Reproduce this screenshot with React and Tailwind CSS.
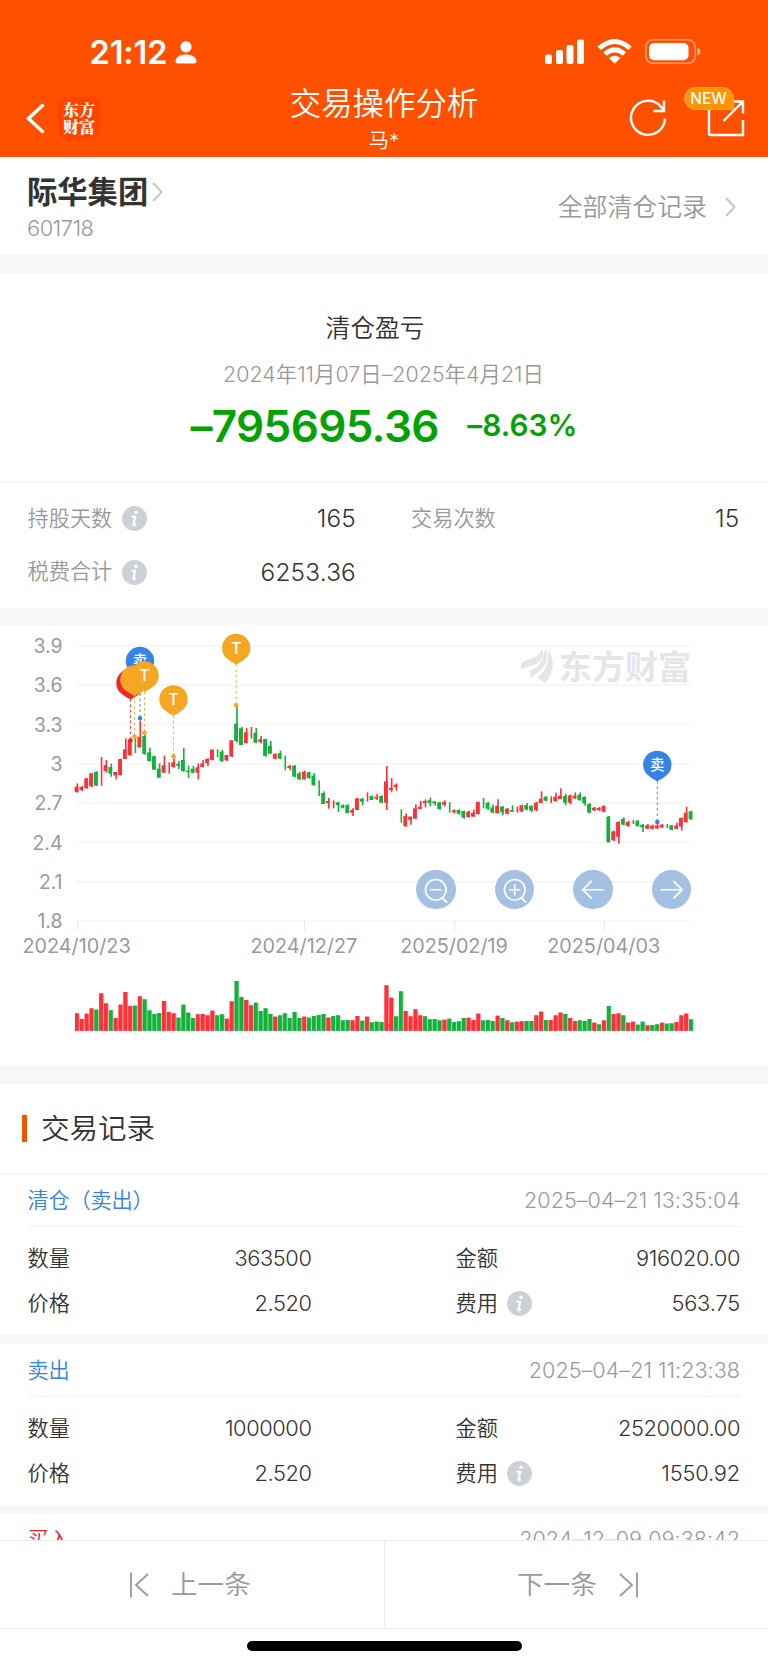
import React from "react";

const UP = "#ff3038";
const DOWN = "#12b23c";

// Per trading day: direction, volume top, wick top, wick bottom, body top, body bottom
const DAYS = `R280 490 518 500 516|R297 498 513 501 510|R281 475 506 475 505|R265 459 501 460 499|G269 454 497 456 497|R220 411 497 0 0|R250 420 458 435 453|G271 431 470 441 461|R294 456 478 456 466|R254 416 466 417 465|R216 355 417 388 417|R258 356 406 358 406|G257 346 399 0 0|R229 302 382 350 382|G238 344 404 348 402|G271 383 423 397 423|G282 407 449 409 449|G279 430 473 446 473|R243 407 458 436 458|R276 427 461 0 0|R280 415 443 427 441|G293 423 447 432 437|G254 384 455 420 453|G278 437 474 452 456|G294 438 460 446 458|R283 430 478 442 458|R282 420 442 430 441|R286 415 438 417 430|R272 388 421 389 420|G286 388 412 0 0|G283 390 426 395 423|R296 405 423 405 421|R244 361 411 361 409|G183 258 368 311 363|G231 321 375 325 375|R240 324 371 337 369|R256 321 356 0 0|G248 324 368 338 368|G273 348 371 358 366|G265 356 410 357 408|G282 363 401 378 401|R290 400 418 402 416|G286 392 418 400 416|G280 407 451 0 0|G294 435 451 438 444|G276 435 472 437 470|G294 455 480 460 478|R290 452 478 455 478|G293 455 476 457 474|G288 459 496 467 496|G285 481 528 0 0|G282 514 552 519 552|R293 534 566 543 549|G288 541 565 0 0|G286 545 576 547 555|G301 553 565 556 563|G300 553 579 555 579|R301 564 588 570 578|R288 534 571 535 570|G302 534 556 536 545|R290 517 545 0 0|G307 526 540 528 540|G305 522 540 530 536|G306 526 548 528 548|R196 438 570 484 548|R233 474 517 504 510|G289 490 512 494 501|G214 568 608 0 0|R273 580 620 588 619|R289 589 614 590 600|R268 553 596 565 596|R286 543 567 560 567|G289 538 562 543 549|G298 533 559 541 549|G297 543 557 544 550|G301 546 569 547 567|R299 541 559 546 554|G296 547 578 0 0|G306 568 580 571 577|G304 568 584 570 581|G294 572 596 573 593|R293 572 593 575 591|R300 569 590 578 590|R281 545 583 546 582|G301 534 565 0 0|G300 546 570 548 566|G303 554 578 562 578|R287 538 580 557 580|G294 558 586 560 577|R301 564 583 566 581|G307 556 576 570 575|R305 560 578 0 0|R304 554 576 556 574|G303 549 571 555 569|G303 556 576 558 572|R286 546 573 548 571|R275 514 549 536 549|G300 529 544 530 542|R300 529 549 0 0|R286 518 545 530 543|R278 505 537 527 537|G282 521 556 528 548|R294 524 553 526 548|R303 517 537 527 535|G301 517 541 524 541|G303 529 557 531 550|G297 549 580 552 578|R308 561 573 563 571|G313 561 573 564 570|R301 556 577 558 575|G258 588 667 590 667|R282 632 663 634 661|R280 604 671 606 650|G286 592 615 597 614|R308 602 620 606 618|R305 600 612 0 0|G314 601 620 602 618|G305 612 636 614 622|R316 612 627 616 626|G315 614 628 617 626|G313 612 628 616 625|R308 612 624 614 622|G311 612 624 0 0|G310 615 631 616 629|R306 608 628 617 626|R286 592 632 594 620|R281 560 608 578 606|G298 572 600 574 598`
  .split("|")
  .map((s) => {
    const n = s.slice(1).split(" ").map(Number);
    return { dir: s[0], vol: n[0], hi: n[1], lo: n[2], top: n[3], bot: n[4] };
  });

// Days whose candle colour differs from the volume bar colour
const CANDLE_FLIP = new Set([38, 44, 53, 62, 66, 72, 78, 108, 119, 120]);

const LABELS = ["3.9", "3.6", "3.3", "3", "2.7", "2.4", "2.1", "1.8"];

function Pin({ x, y, color, label, dotY }) {
  return (
    <g>
      <line x1={x} y1={y + 16} x2={x} y2={dotY} stroke={color} strokeWidth="1.1" strokeDasharray="2.7 2.7" opacity="0.85" />
      <circle cx={x} cy={dotY} r="2.3" fill={color} />
      <path d={`M${x - 11.5} ${y + 8.4}A14.2 14.2 0 1 1 ${x + 11.5} ${y + 8.4}Q${x + 7} ${y + 13} ${x} ${y + 16.4}Q${x - 7} ${y + 13} ${x - 11.5} ${y + 8.4}Z`} fill={color} />
      {label && (
        <text x={x} y={label === "T" ? y + 5.6 : y + 5.4} textAnchor="middle" fill="#fff" fontSize={label === "T" ? 16 : 14.5} fontWeight="500" fontFamily="Inter, 'Noto Sans CJK SC', sans-serif">
          {label}
        </text>
      )}
    </g>
  );
}

function Chart() {
  return (
    <svg className="block h-[441px] w-[768px]" viewBox="0 0 768 441">
      {LABELS.map((t, i) => {
        const y = 20.8 + i * 39.34;
        return (
          <g key={t}>
            <line x1="77" x2="691" y1={y} y2={y} stroke="#f5f5f5" strokeWidth="1.6" />
            <text x="62.5" y={y + 7.2} textAnchor="end" fontSize="19.4" fontWeight="400" fill="#999">{t}</text>
          </g>
        );
      })}
      {[77.8, 304.5, 454.5, 604.5].map((x) => (
        <line key={x} x1={x} x2={x} y1="296" y2="305" stroke="#e9e9e9" strokeWidth="1.2" />
      ))}
      {[[76.6, "2024/10/23"], [303.8, "2024/12/27"], [454, "2025/02/19"], [603.7, "2025/04/03"]].map(([x, t]) => (
        <text key={t} x={x} y="328" textAnchor="middle" fontSize="19.8" fontWeight="400" fill="#999">{t}</text>
      ))}

      <g fill="#e5e5ea">
        <path d="M521 38C527 33.500 539 33 542.300 24.400C546 31 540 38.500 531 41C527 42.200 524 42 521.300 44.500Z" />
        <path d="M529.500 45.500C537 43.500 544.500 37 544.800 23.600C550.500 31 546 41 539 46.500C535.500 49 533 50.500 532 53.500C530.500 51 530 48 529.500 45.500Z" />
        <path d="M538 51.500C545 47 549.500 39 547.800 25C555.500 34 554 48 545.500 58C541.500 56.500 539.500 55 538 51.500Z" />
        <text x="559" y="54" fontSize="33" fontWeight="700" fontFamily="'Noto Sans CJK SC', sans-serif">东方财富</text>
      </g>

      {DAYS.map((d, i) => {
        const x = 77 + i * 4.8346;
        const up = (d.dir === "R") !== CANDLE_FLIP.has(i);
        const c = up ? UP : DOWN;
        return (
          <g key={i}>
            <rect x={x - 0.4} y={d.hi / 3 - 5} width="1.6" height={(d.lo - d.hi) / 3} fill={c} />
            {d.bot > 0 && <rect x={x - 2.4} y={d.top / 3 - 5} width="3.8" height={(d.bot - d.top) / 3} fill={c} />}
            <rect x={x - 2} y={d.vol / 3 + 295} width="4.6" height={(332.5 - d.vol) / 3} fill={d.dir === "R" ? UP : DOWN} opacity="0.5" />
            <rect x={x - 2} y={d.vol / 3 + 295} width="3.8" height={(332.5 - d.vol) / 3} fill={d.dir === "R" ? UP : DOWN} />
          </g>
        );
      })}

      <Pin x={130.5} y={58} color="#f5222a" label="买" dotY={115.5} />
      <Pin x={140} y={36} color="#3583e4" label="卖" dotY={93.3} />
      <Pin x={134.5} y={54.5} color="#f5a623" dotY={111.7} />
      <Pin x={144.5} y={50.5} color="#f5a623" label="T" dotY={107.8} />
      <Pin x={173.5} y={74.3} color="#f5a623" label="T" dotY={131.3} />
      <Pin x={236.2} y={23} color="#f5a623" label="T" dotY={80.3} />
      <Pin x={657.3} y={139.8} color="#3583e4" label="卖" dotY={197} />
    </svg>
  );
}

function RoundButton({ kind }) {
  return (
    <button className="flex h-[39.5px] w-[39.5px] items-center justify-center rounded-full bg-[#a4c1e4]">
      <svg className="h-[39.5px] w-[39.5px]" viewBox="0 0 40 40" fill="none" stroke="#fff" strokeWidth="1.7" strokeLinecap="round">
        {(kind === "minus" || kind === "plus") && (
          <>
            <circle cx="20" cy="20" r="10.4" />
            <path d="M15 20h10M27 28.500L31 32.500" />
          </>
        )}
        {kind === "plus" && <path d="M20 15v10" />}
        {kind === "left" && <path d="M31 20H10M18.500 11.500L10 20L18.500 28.500" />}
        {kind === "right" && <path d="M9.500 20H30.500M22 11.500L30.500 20L22 28.500" />}
      </svg>
    </button>
  );
}

function Info() {
  return (
    <svg className="h-[25px] w-[25px]" viewBox="0 0 25 25">
      <circle cx="12.500" cy="12.500" r="12.500" fill="#cdd1d7" />
      <circle cx="14" cy="6.300" r="1.700" fill="#fff" />
      <path d="M10.500 10.700H13.200L11.500 18C11.200 19.700 12 19.700 13.200 18.700" fill="none" stroke="#fff" strokeWidth="2.100" strokeLinecap="round" strokeLinejoin="round" />
    </svg>
  );
}

function Chevron() {
  return (
    <svg className="h-[20px] w-[11px]" viewBox="0 0 11 20" fill="none" stroke="#c6c6c6" strokeWidth="2">
      <path d="M1 1L9.500 10L1 19" />
    </svg>
  );
}

function Record({ title, date, qty, price, amount, fee }) {
  return (
    <section className="mb-[9px] h-[161px] shrink-0 bg-white px-[27.5px]">
      <div className="flex h-[53px] items-center justify-between border-b border-[#f3f3f3] pt-[2px]">
        <h3 className="text-[21.2px] tracking-[-0.2px] text-[#3583e4]">{title}</h3>
        <time className="mr-[0.5px] text-[21.6px] tracking-[0.02px] text-[#999]">{date}</time>
      </div>
      <div className="flex pt-[10px] text-[21.2px] text-[#333]">
        <div className="w-[284px]">
          <div className="flex h-[44.7px] items-center justify-between"><span>数量</span><span className="text-[21.8px] tracking-[-0.4px]">{qty}</span></div>
          <div className="flex h-[44.7px] items-center justify-between"><span>价格</span><span className="text-[21.8px] tracking-[-0.4px]">{price}</span></div>
        </div>
        <div className="ml-[144px] flex-1 pr-[0.5px]">
          <div className="flex h-[44.7px] items-center justify-between"><span>金额</span><span className="text-[21.8px] tracking-[-0.35px]">{amount}</span></div>
          <div className="flex h-[44.7px] items-center">
            <span className="mr-[9px]">费用</span><Info /><span className="ml-auto text-[21.8px] tracking-[-0.15px]">{fee}</span>
          </div>
        </div>
      </div>
    </section>
  );
}

export default function App() {
  return (
    <div className="flex h-[1665px] w-[768px] flex-col overflow-hidden bg-[#f7f7f7] font-['Inter','Noto_Sans_CJK_SC',sans-serif] leading-none font-[360] whitespace-nowrap">
      <header className="flex h-[157px] shrink-0 flex-col bg-[#ff5000] text-white">
        <div className="flex h-[79px] items-end pr-[67px] pl-[89.5px]">
          <span className="mb-[9.5px] text-[32.5px] font-semibold tracking-[-0.1px]">21:12</span>
          <svg className="mb-[15px] ml-[8px] h-[23px] w-[22px]" viewBox="0 0 22 23" fill="#fff">
            <circle cx="11" cy="5.800" r="5.600" />
            <path d="M0.500 20C1 15.500 6 13.500 11 13.500S21 15.500 21.500 20Q21.500 22.500 19 22.500H3Q0.500 22.500 0.500 20Z" />
          </svg>
          <svg className="mb-[14px] ml-auto h-[26px] w-[157px]" viewBox="0 0 157 26" fill="#fff">
            <rect x="1" y="15.500" width="7" height="9.500" rx="2" />
            <rect x="12" y="11" width="7" height="14" rx="2" />
            <rect x="22.500" y="6" width="7" height="19" rx="2" />
            <rect x="33" y="0.500" width="7" height="24.500" rx="2" />
            <g transform="translate(53.500 0)">
              <path d="M0 7.500Q17.200 -7.500 34.400 7.500L31 11Q17.200 -1 3.400 11Z" />
              <path d="M5.700 13.300Q17.200 3 28.700 13.300L25.300 16.700Q17.200 9.700 9.100 16.700Z" />
              <path d="M11.500 19Q17.200 14.500 22.900 19L17.200 24.800Z" />
            </g>
            <rect x="101.800" y="0.800" width="49.500" height="23.500" rx="7.500" fill="none" stroke="#fff" strokeOpacity=".45" strokeWidth="1.600" />
            <rect x="105" y="4" width="39.500" height="17.200" rx="5" />
            <path d="M153.300 8.800Q156.500 9.500 156.500 12.500T153.300 16.500Z" opacity=".5" />
          </svg>
        </div>
        <div className="flex h-[78px] items-center">
          <div className="flex w-[260px] items-center">
            <svg className="ml-[26px] h-[31px] w-[19px]" viewBox="0 0 19 31" fill="none" stroke="#fff" strokeWidth="3.500"><path d="M17.500 1.500L2.500 15.500L17.500 29.500" /></svg>
            <div className="ml-[13px] flex h-[42px] w-[42px] flex-col items-center justify-center rounded-[9px] bg-[#ff4400] font-['Noto_Serif_CJK_SC','Noto_Sans_CJK_SC',sans-serif] text-[16px] leading-[17.5px] font-black">
              <span>东方</span><span>财富</span>
            </div>
          </div>
          <div className="flex w-[248px] flex-col items-center pt-[4px]">
            <h1 className="text-[31.4px] leading-[38px]">交易操作分析</h1>
            <span className="mt-[2px] text-[20.5px] leading-[31px]">马*</span>
          </div>
          <div className="relative flex flex-1 items-center pl-[121px]">
            <svg className="h-[38px] w-[38px]" viewBox="0 0 38 38" fill="none" stroke="#fff" strokeWidth="2.400">
              <path d="M36 19.500A17 17 0 1 1 31.500 7.300L35.500 12M35 1.500V12H24.500" />
            </svg>
            <svg className="ml-[40px] h-[38px] w-[38px]" viewBox="0 0 38 38" fill="none" stroke="#fff" strokeWidth="2.400">
              <path d="M2 8V34Q2 36 4 36H36V21M24 2.500H36V14.500M36 2.500L16.500 22" />
            </svg>
            <span className="absolute top-[-12px] left-[175.500px] flex h-[23px] w-[50px] items-center justify-center rounded-[11.500px] rounded-br-[2px] border border-[#ffab45] bg-[#ff9300] pt-[1px] text-[15.500px] font-medium">NEW</span>
          </div>
        </div>
      </header>

      <section className="flex h-[98px] shrink-0 items-center justify-between bg-white pr-[32px] pl-[27px]">
        <div className="pt-[6px]">
          <div className="flex items-center">
            <h2 className="text-[30.3px] leading-[38px] font-bold text-[#333]">际华集团</h2>
            <span className="ml-[4px]"><Chevron /></span>
          </div>
          <p className="text-[22px] leading-[34px] tracking-[-0.6px] text-[#999]">601718</p>
        </div>
        <div className="flex items-center pt-[2px] text-[24.9px] text-[#999]">全部清仓记录<span className="ml-[18px]"><Chevron /></span></div>
      </section>

      <section className="mt-[18px] flex h-[334.5px] shrink-0 flex-col bg-white">
        <div className="flex h-[209.5px] flex-col items-center border-b border-[#f3f3f3] pt-[37px]">
          <h2 className="mr-[18px] text-[24.8px] leading-[36px] text-[#333]">清仓盈亏</h2>
          <p className="mt-[10px] mr-[1px] text-[21.4px] leading-[36px] tracking-[0.02px] text-[#999]">2024年11月07日–2025年4月21日</p>
          <div className="mt-[8px] flex h-[52px] items-center font-semibold text-[#04a304]">
            <span className="text-[44px] tracking-[-0.65px]">–795695.36</span>
            <span className="ml-[28.5px] text-[29.8px] tracking-[0.05px]">–8.63%</span>
          </div>
        </div>
        <div className="grid grid-cols-[328.5px_328.5px] gap-x-[55px] pt-[9px] pl-[27.5px] text-[21.2px] text-[#999]">
          <div className="flex h-[53.7px] items-center"><span className="mr-[9.5px]">持股天数</span><Info /><span className="ml-auto text-[24.4px] tracking-[0.2px] text-[#333]">165</span></div>
          <div className="flex h-[53.7px] items-center justify-between">交易次数<span className="text-[24.4px] tracking-[0.2px] text-[#333]">15</span></div>
          <div className="flex h-[53.7px] items-center"><span className="mr-[9.5px]">税费合计</span><Info /><span className="ml-auto text-[24.4px] tracking-[0.2px] text-[#333]">6253.36</span></div>
        </div>
      </section>

      <section className="relative mt-[17.5px] h-[441px] shrink-0 bg-white">
        <Chart />
        <div className="absolute top-[244.5px] left-[416px] flex gap-[39px]">
          <RoundButton kind="minus" /><RoundButton kind="plus" /><RoundButton kind="left" /><RoundButton kind="right" />
        </div>
      </section>

      <section className="mt-[18px] flex h-[89.5px] shrink-0 items-center border-b border-[#f1f1f1] bg-white pl-[21.5px]">
        <span className="h-[27px] w-[5.5px] bg-[#f25600]" />
        <h2 className="mt-[2px] ml-[14px] text-[28.5px] text-[#333]">交易记录</h2>
      </section>

      <div className="flex h-[366.5px] shrink-0 flex-col overflow-hidden">
        <Record title="清仓（卖出）" date="2025–04–21 13:35:04" qty="363500" price="2.520" amount="916020.00" fee="563.75" />
        <Record title="卖出" date="2025–04–21 11:23:38" qty="1000000" price="2.520" amount="2520000.00" fee="1550.92" />
        <section className="flex h-[53px] shrink-0 items-center justify-between bg-white px-[27.5px]">
          <h3 className="text-[21.2px] text-[#f5222a]">买入</h3>
          <time className="mr-[0.5px] text-[21.6px] tracking-[0.02px] text-[#999]">2024–12–09 09:38:42</time>
        </section>
      </div>

      <nav className="flex h-[89px] shrink-0 border-y border-[#ededed] bg-white text-[26.6px] text-[#999]">
        <button className="flex w-[385px] items-center border-r border-[#ededed] pl-[130px]">
          <svg className="h-[26px] w-[19px]" viewBox="0 0 19 26" fill="none" stroke="#999" strokeWidth="1.8"><path d="M1 0.500V25.500M18 2L6 13L18 24" /></svg>
          <span className="ml-[22px]">上一条</span>
        </button>
        <button className="flex w-[383px] items-center pl-[132px]">
          <span>下一条</span>
          <svg className="ml-[22px] h-[26px] w-[19px]" viewBox="0 0 19 26" fill="none" stroke="#999" strokeWidth="1.8"><path d="M18 0.500V25.500M1 2L13 13L1 24" /></svg>
        </button>
      </nav>
      <footer className="flex flex-1 justify-center bg-white pt-[12px]">
        <div className="h-[9.5px] w-[275px] rounded-full bg-black" />
      </footer>
    </div>
  );
}
